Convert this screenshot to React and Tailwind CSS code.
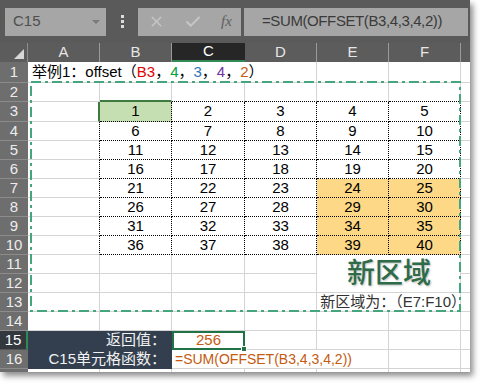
import React from 'react';
import { X, Check } from 'lucide-react';

const FONT = "font-['Liberation_Sans','Noto_Sans_CJK_SC',sans-serif]";

const heights = [21, 19, 20, 19, 19, 19, 19, 19, 19, 19, 19, 19, 19, 19, 19, 19, 19];
const hClass = { 19: 'h-[19px]', 20: 'h-[20px]', 21: 'h-[21px]' };
const widths = ['w-[72px]', 'w-[72px]', 'w-[73px]', 'w-[72px]', 'w-[72px]', 'w-[72px]'];
const letters = ['A', 'B', 'C', 'D', 'E', 'F'];

const GRID = 'border-r border-b border-[#d4d4d4]';

// border classes for one cell (r = excel row, c = 0..5 for A..F)
const cellBorder = (r, c) => {
  if (r >= 3 && r <= 10 && c >= 1) return 'border-r border-b border-dotted border-black';
  if (r === 2 && c === 1) return 'border-r border-b-2 border-r-[#d4d4d4] border-b-[#3f7a3f]';
  if (r === 2 && c >= 1) return 'border-r border-b border-r-[#d4d4d4] border-b-black [border-bottom-style:dotted]';
  if (r === 3 && c === 0) return 'border-r-2 border-b border-b-[#d4d4d4] border-r-[#3f7a3f]';
  if (r >= 4 && r <= 10 && c === 0) return 'border-r border-b border-b-[#d4d4d4] border-r-black [border-right-style:dotted]';
  if (r === 1 && c <= 2) return 'border-b border-[#d4d4d4]';
  if ((r === 11 || r === 12) && c === 4) return r === 11 ? '' : 'border-b border-[#d4d4d4]';
  if (r === 11 && c === 5) return 'border-r border-[#d4d4d4]';
  if (r === 13 && c === 4) return 'border-b border-[#d4d4d4]';
  if (r === 16 && (c === 2 || c === 3)) return 'border-b border-[#d4d4d4]';
  return GRID;
};

const cellFill = (r, c) => {
  if (r === 3 && c === 1) return 'bg-[#c6dfb2]';
  if (r >= 7 && r <= 10 && c >= 4) return 'bg-[#fdd886]';
  return '';
};

const RowHead = ({ n, h }) => (
  <div
    className={`w-[28px] shrink-0 ${hClass[h]} flex items-center justify-center border-b text-[15px] ${
      n === 15
        ? 'bg-[#33383f] text-white border-b-[#555] border-r-2 border-r-[#2f8a55]'
        : 'bg-[#6e6e6e] text-[#ececec] border-[#8c8c8c]'
    }`}
  >
    {n}
  </div>
);

const Row1Text = () => (
  <span className="text-[15px] text-black whitespace-nowrap pl-[4px]">
    举例1：offset（<span className="text-[#e00000]">B3</span>，<span className="text-[#00a040]">4</span>，
    <span className="text-[#2f75b5]">3</span>，<span className="text-[#7030a0]">4</span>，
    <span className="text-[#c55a11]">2</span>）
  </span>
);

const App = () => {
  return (
    <div className={`w-[480px] h-[389px] bg-white relative overflow-hidden ${FONT}`}>
      <div className="w-[470px] h-[372px] bg-white relative overflow-hidden shadow-[3px_4px_6px_rgba(0,0,0,0.45)]">
        {/* formula bar */}
        <div className="h-[43px] bg-[#5a5a5a] flex items-center">
          <div className="ml-[5px] w-[101px] h-[28px] bg-[#a6a6a6] flex items-center justify-between pl-[8px] pr-[6px]">
            <span className="text-[15px] text-[#4f4f4f]">C15</span>
            <span className="w-0 h-0 border-l-[4px] border-r-[4px] border-t-[4px] border-l-transparent border-r-transparent border-t-[#7a7a7a]" />
          </div>
          <div className="w-[32px] flex flex-col items-center gap-[2px]">
            <span className="w-[3px] h-[3px] bg-[#dcdcdc]" />
            <span className="w-[3px] h-[3px] bg-[#dcdcdc]" />
            <span className="w-[3px] h-[3px] bg-[#dcdcdc]" />
          </div>
          <div className="w-[103px] h-[28px] bg-[#a6a6a6] flex items-center pl-[10px]">
            <X size={17} strokeWidth={2} className="text-[#c6c6c6]" />
            <Check size={18} strokeWidth={2.5} className="text-[#c6c6c6] ml-[19px]" />
            <span className="ml-[19px] text-[15px] italic text-[#5f5f5f] font-['Liberation_Serif',serif]">fx</span>
          </div>
          <div className="ml-[3px] flex-1 mr-[2px] h-[28px] bg-[#a6a6a6] flex items-center pl-[18px]">
            <span className="text-[15px] tracking-[-0.4px] text-[#3a3a3a]">=SUM(OFFSET(B3,4,3,4,2))</span>
          </div>
        </div>

        {/* column headers */}
        <div className="h-[19px] flex bg-[#5c5c5c]">
          <div className="w-[28px] shrink-0 flex items-end justify-end pr-[3px] pb-[3px] border-r border-[#8c8c8c]">
            <span className="w-0 h-0 border-b-[10px] border-l-[10px] border-l-transparent border-b-[#d8d8d8]" />
          </div>
          {letters.map((l, i) => (
            <div
              key={l}
              className={`${widths[i]} shrink-0 flex items-center justify-center text-[15px] ${
                l === 'C'
                  ? 'bg-[#262626] text-white border-b-2 border-[#2f8a55]'
                  : 'text-[#e6e6e6] border-r border-[#9a9a9a]'
              }`}
            >
              {l}
            </div>
          ))}
          <div className="flex-1" />
        </div>

        {/* rows */}
        {heights.map((h, idx) => {
          const r = idx + 1;
          return (
            <div key={r} className={`flex ${hClass[h]}`}>
              <RowHead n={r} h={h} />
              {r === 15 || r === 16 ? (
                <>
                  <div className="w-[144px] shrink-0 bg-[#333f4f] text-[#f2f2f2] text-[15px] flex items-center justify-end pr-[6px] whitespace-nowrap">
                    {r === 15 ? '返回值：' : 'C15单元格函数：'}
                  </div>
                  {r === 15 ? (
                    <div className="w-[73px] shrink-0 relative border-2 border-[#217346] flex items-center justify-center text-[15px] text-[#c55a11]">
                      256
                      <span className="absolute -right-[4px] -bottom-[4px] w-[6px] h-[6px] bg-[#217346] border border-white" />
                    </div>
                  ) : (
                    <div className={`w-[73px] shrink-0 ${cellBorder(r, 2)} flex items-center`}>
                      <span className="pl-[3px] text-[14px] text-[#c55a11] whitespace-nowrap">=SUM(OFFSET(B3,4,3,4,2))</span>
                    </div>
                  )}
                  {[3, 4, 5].map((c) => (
                    <div key={c} className={`${widths[c]} shrink-0 ${cellBorder(r, c)}`} />
                  ))}
                </>
              ) : (
                letters.map((l, c) => (
                  <div
                    key={l}
                    className={`${widths[c]} shrink-0 flex items-center justify-center text-[15px] text-black ${cellBorder(r, c)} ${cellFill(r, c)}`}
                  >
                    {r === 1 && c === 0 && (
                      <div className="w-full flex justify-start overflow-visible">
                        <Row1Text />
                      </div>
                    )}
                    {r >= 3 && r <= 10 && c >= 1 && (r - 3) * 5 + c}
                  </div>
                ))
              )}
              <div className="flex-1 border-b border-[#d4d4d4]" />
            </div>
          );
        })}

        {/* overlays */}
        <svg className="absolute left-[30px] top-[81px]" width="432" height="232">
          <rect x="1" y="1" width="429" height="229" fill="none" stroke="#45a67e" strokeWidth="2" strokeDasharray="10 4 3 4" />
        </svg>
        <div className="absolute left-[317px] w-[144px] top-[257px] h-[28px] flex items-center justify-center">
          <span className="text-[28px] font-medium text-[#2d6b49] font-['Noto_Sans_CJK_SC',sans-serif] [text-shadow:1px_1px_2px_rgba(0,0,0,0.25)] leading-none">
            新区域
          </span>
        </div>
        <div className="absolute right-[4px] top-[293px] h-[19px] flex items-center">
          <span className="text-[15px] text-[#333] whitespace-nowrap">新区域为：（E7:F10）</span>
        </div>
      </div>
    </div>
  );
};

export default App;
